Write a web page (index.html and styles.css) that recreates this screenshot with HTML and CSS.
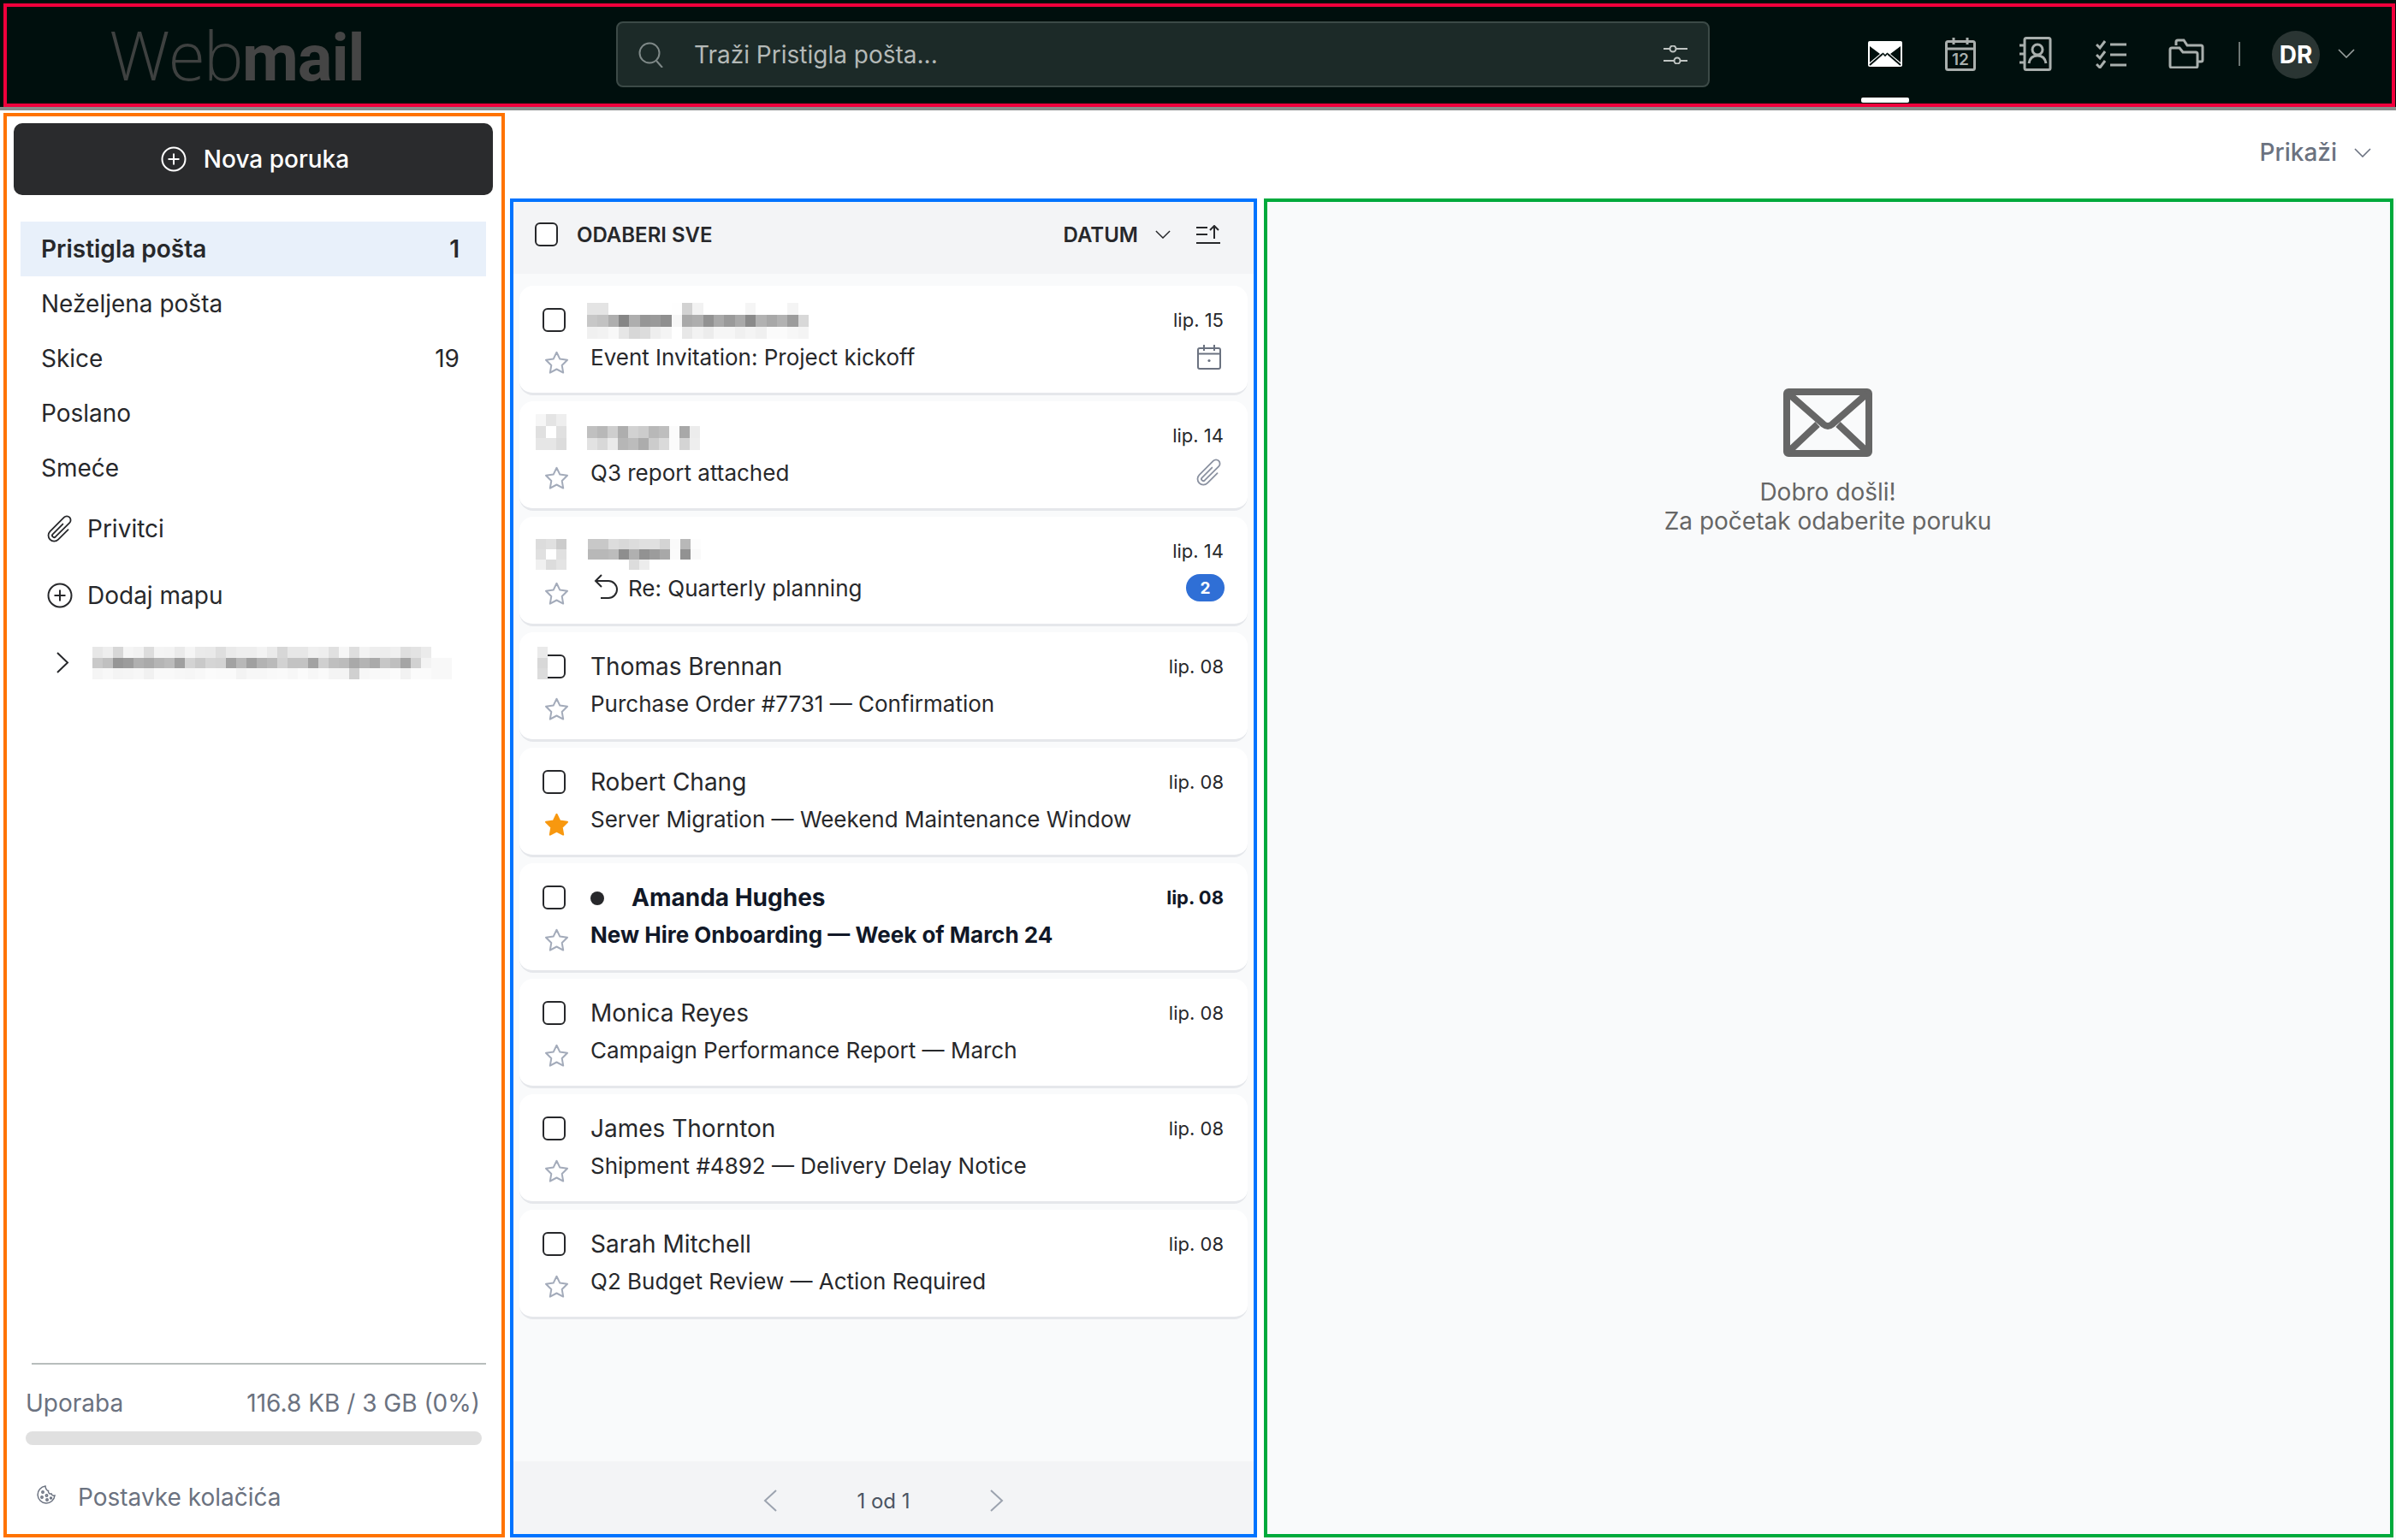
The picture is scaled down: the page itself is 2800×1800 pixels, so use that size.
FILE: index.html
```html
<!DOCTYPE html>
<html lang="hr">
<head>
  <meta charset="UTF-8" />
  <title>Webmail</title>
  <link rel="stylesheet" href="styles.css">
</head>
<body>

  <svg class="sprite" aria-hidden="true">
    <symbol id="i-star" viewBox="0 0 29 27"><path d="M14.5 1.8 18.3 9.6 27 10.8 20.7 17 22.2 25.6 14.5 21.5 6.8 25.6 8.3 17 2 10.8 10.7 9.6Z" stroke-linejoin="round"/></symbol>
    <symbol id="i-clip" viewBox="0 0 24 24"><path d="M18.375 12.739l-7.693 7.693a4.5 4.5 0 01-6.364-6.364l10.94-10.94A3 3 0 1119.5 7.372L8.552 18.32m.009-.01l-.01.01m5.699-9.941l-7.81 7.81a1.5 1.5 0 002.112 2.13" stroke-linecap="round" stroke-linejoin="round"/></symbol>
    <symbol id="i-plus" viewBox="0 0 30 30"><circle cx="15" cy="15" r="13.5"/><path d="M15 8.5v13M8.5 15h13"/></symbol>
    <symbol id="i-down" viewBox="0 0 20 11"><path d="M1 1l9 9 9-9"/></symbol>
  </svg>

  <header class="topbar">
    <div class="logo">Web<b>mail</b></div>
    <div class="search">
      <svg class="search-icon" viewBox="0 0 30 30"><circle cx="13" cy="13" r="11.5"/><path d="M21 22l7 8"/></svg>
      <span class="search-text">Traži Pristigla pošta...</span>
      <svg class="search-filter" viewBox="0 0 28 22"><path d="M0 4h7M15 4h13M0 18h12M20 18h8"/><circle cx="11" cy="4" r="3.5"/><circle cx="16" cy="18" r="3.5"/></svg>
    </div>
    <nav class="apps">
      <div class="app-tab active">
        <svg class="app-icon" width="40" height="30" viewBox="0 0 40 30"><rect width="40" height="30" rx="2" fill="#fff" stroke="none"/><path d="M2 6l12 9L2 25zM38 6L26 15l12 10z" fill="#000f0d" stroke="none"/><path d="M2 28l15-13M38 28L23 15" stroke="#000f0d" stroke-width="2"/><path d="M17 14l3 3 3-3" stroke="#000f0d" stroke-width="1.6"/></svg>
      </div>
      <div class="app-tab">
        <svg class="app-icon" width="36" height="40" viewBox="0 0 36 40"><rect x="1.5" y="5.5" width="33" height="33" rx="2"/><path d="M1.5 14h33M10 1v8M26 1v8"/><text class="cal-day" x="18" y="33" text-anchor="middle">12</text></svg>
      </div>
      <div class="app-tab">
        <svg class="app-icon" width="38" height="40" viewBox="0 0 38 40"><rect x="6" y="1.5" width="30" height="37" rx="2"/><path d="M0 10h6M0 20h6M0 30h6"/><circle cx="21" cy="15" r="6"/><path d="M11 31c1-6 5-9 10-9s9 3 10 9"/></svg>
      </div>
      <div class="app-tab">
        <svg class="app-icon" width="36" height="34" viewBox="0 0 36 34"><path d="M1 6l4 4 6-8M1 18l4 4 6-8M1 29l4 4 6-8M17 6h19M17 18h19M17 30h19"/></svg>
      </div>
      <div class="app-tab">
        <svg class="app-icon" width="42" height="35" viewBox="0 0 42 35"><path d="M2 13a2 2 0 012-2h9l4 5h15a2 2 0 012 2v14a2 2 0 01-2 2H4a2 2 0 01-2-2z"/><path d="M9 8V4a2 2 0 012-2h7l4 6h16a2 2 0 012 2v15a2 2 0 01-2 2h-3"/></svg>
      </div>
    </nav>
    <span class="topbar-divider"></span>
    <div class="avatar">DR</div>
    <svg class="chev chev-top" viewBox="0 0 20 11"><use href="#i-down"/></svg>
  </header>

  <div class="layout">
    <aside class="sidebar">
      <button class="compose">
        <svg class="compose-icon" viewBox="0 0 30 30"><use href="#i-plus"/></svg>
        Nova poruka
      </button>

      <ul class="folders">
        <li class="folder active"><span>Pristigla pošta</span><span>1</span></li>
        <li class="folder"><span>Neželjena pošta</span></li>
        <li class="folder"><span>Skice</span><span>19</span></li>
        <li class="folder"><span>Poslano</span></li>
        <li class="folder"><span>Smeće</span></li>
      </ul>

      <div class="side-link"><svg class="side-icon side-clip" viewBox="0 0 24 24"><use href="#i-clip"/></svg>Privitci</div>
      <div class="side-link"><svg class="side-icon side-plus" viewBox="0 0 30 30"><use href="#i-plus"/></svg>Dodaj mapu</div>
      <div class="side-link side-account">
        <svg class="side-chevron" viewBox="0 0 15 25"><path d="M1 1l12 11.5L1 24"/></svg>
        <div class="mosaic mosaic-nav" data-rows="e7eed7f5f2ddf4f3eaf5eae9deeaeeeef3ead7e7e7f0eee0f6def3eeedf0dfe3eb|c9c0969cb0aab5bb9fd3c9d5d3a2b8a0b3bad2c3c3a2cfbfbca9b4aac7bfa5d1f3f8f8|f5f8f4f5f7f1f9f9f7f6f8fbfafaf3f7f7f9faf7fbf7faf4f4d0f7f9f9fbf2fbfbf8f8"></div>
      </div>

      <div class="side-foot">
        <div class="side-rule"></div>
        <div class="usage"><span>Uporaba</span><span>116.8 KB / 3 GB (0%)</span></div>
        <div class="usage-bar"></div>
        <div class="cookies">
          <svg class="cookie-icon" viewBox="0 0 24 24"><path d="M11 2a10 10 0 1011 11c-2 .5-3.5-.5-4-2-2 .5-4-1-3.500-3.500C13 7.500 11 5 11 2z"/><circle cx="8" cy="9" r="1.200"/><circle cx="7" cy="15" r="1.200"/><circle cx="12.500" cy="13" r="1.200"/><circle cx="13" cy="18" r="1.200"/><circle cx="17.500" cy="16" r="1"/></svg>
          Postavke kolačića
        </div>
      </div>
    </aside>

    <main class="content">
      <div class="toolbar">
        <span>Prikaži</span>
        <svg class="chev" viewBox="0 0 20 11"><use href="#i-down"/></svg>
      </div>

      <div class="panels">
        <section class="list">
          <div class="list-head">
            <span class="check"></span>
            <span class="select-all">ODABERI SVE</span>
            <span class="sort-name">DATUM</span>
            <svg class="chev chev-sort" viewBox="0 0 20 11"><use href="#i-down"/></svg>
            <svg class="sort-icon" viewBox="0 0 28 22"><path d="M0 3h13M0 11h13M0 21h28M21 16V1M16 6l5-5 5 5"/></svg>
          </div>

          <div class="cards">
            <article class="card">
              <span class="check"></span>
              <span class="name"></span>
              <span class="date">lip. 15</span>
              <svg class="star" viewBox="0 0 29 27"><use href="#i-star"/></svg>
              <span class="subject">Event Invitation: Project kickoff</span>
              <svg class="meta-icon" viewBox="0 0 28 29"><rect x="1" y="4" width="26" height="24" rx="2"/><path d="M1 10.500h26M8 0v7M20 0v7"/><circle class="meta-dot" cx="14" cy="18.500" r="1.600"/></svg>
              <div class="mosaic mosaic-s1" data-rows="e4e4fffffffffffffed2f2fffffffff5fffffff4ff|c7c2ae86ae969a8ff7a9ae92a99aa98ab2a8b29cd8|f0f2f8e6d7dceef4ffe8f2ecf6f6f0f4f0fbfbf7f4"></div>
            </article>

            <article class="card">
              <span class="check"></span>
              <span class="name"></span>
              <span class="date">lip. 14</span>
              <svg class="star" viewBox="0 0 29 27"><use href="#i-star"/></svg>
              <span class="subject">Q3 report attached</span>
              <svg class="meta-clip" viewBox="0 0 24 24"><use href="#i-clip"/></svg>
              <div class="mosaic mosaic-a2" data-rows="f6e4ee|e0ffe0|e6e6dc"></div>
              <div class="mosaic mosaic-s2" data-rows="c0b8ceaed2ccb8befba8ec|e2d8eab6bcacccdafbd4ee"></div>
            </article>

            <article class="card">
              <span class="check"></span>
              <span class="name"></span>
              <span class="date">lip. 14</span>
              <svg class="star" viewBox="0 0 29 27"><use href="#i-star"/></svg>
              <span class="subject">
                <svg class="reply-icon" viewBox="0 0 29 31"><path d="M10 2L3 9l7 7M3 9h15a10 10 0 010 20H9"/></svg>
                Re: Quarterly planning
              </span>
              <span class="badge">2</span>
              <div class="mosaic mosaic-a3" data-rows="dce0cc|e0ffe0|f0dce4"></div>
              <div class="mosaic mosaic-s3" data-rows="c8c8dcd8dce0e0d4fab8fd|b8b8bc8eb0929ca8fb92f9|ffffffffdcecffffffffff"></div>
            </article>

            <article class="card">
              <span class="check"></span>
              <span class="name">Thomas Brennan</span>
              <span class="date">lip. 08</span>
              <svg class="star" viewBox="0 0 29 27"><use href="#i-star"/></svg>
              <span class="subject">Purchase Order #7731 — Confirmation</span>
              <div class="mosaic mosaic-a4" data-rows="ea|d8|dc"></div>
            </article>

            <article class="card">
              <span class="check"></span>
              <span class="name">Robert Chang</span>
              <span class="date">lip. 08</span>
              <svg class="star starred" viewBox="0 0 29 27"><use href="#i-star"/></svg>
              <span class="subject">Server Migration — Weekend Maintenance Window</span>
            </article>

            <article class="card unread">
              <span class="check"></span>
              <span class="name"><i class="dot"></i>Amanda Hughes</span>
              <span class="date">lip. 08</span>
              <svg class="star" viewBox="0 0 29 27"><use href="#i-star"/></svg>
              <span class="subject">New Hire Onboarding — Week of March 24</span>
            </article>

            <article class="card">
              <span class="check"></span>
              <span class="name">Monica Reyes</span>
              <span class="date">lip. 08</span>
              <svg class="star" viewBox="0 0 29 27"><use href="#i-star"/></svg>
              <span class="subject">Campaign Performance Report — March</span>
            </article>

            <article class="card">
              <span class="check"></span>
              <span class="name">James Thornton</span>
              <span class="date">lip. 08</span>
              <svg class="star" viewBox="0 0 29 27"><use href="#i-star"/></svg>
              <span class="subject">Shipment #4892 — Delivery Delay Notice</span>
            </article>

            <article class="card">
              <span class="check"></span>
              <span class="name">Sarah Mitchell</span>
              <span class="date">lip. 08</span>
              <svg class="star" viewBox="0 0 29 27"><use href="#i-star"/></svg>
              <span class="subject">Q2 Budget Review — Action Required</span>
            </article>
          </div>

          <div class="pager">
            <svg class="pager-arrow" viewBox="0 0 16 26"><path d="M15 1L2 13l13 12"/></svg>
            <span class="pager-text">1 od 1</span>
            <svg class="pager-arrow" viewBox="0 0 16 26"><path d="M1 1l13 12L1 25"/></svg>
          </div>
        </section>

        <section class="detail">
          <svg class="detail-icon" viewBox="0 0 104 80"><rect x="4" y="4" width="96" height="72" rx="2"/><path d="M6 6l41 36q5 4 10 0L98 6M6 74l34-32M98 74L64 42"/></svg>
          <p>Dobro došli!<br>Za početak odaberite poruku</p>
        </section>
      </div>
    </main>
  </div>

  <!-- okviri oznaka regija -->
  <div class="region region-top"></div>
  <div class="region region-side"></div>
  <div class="region region-list"></div>
  <div class="region region-detail"></div>

  <script src="mosaic.js"></script>
</body>
</html>
```

FILE: styles.css
```css
* {
  box-sizing: border-box;
}

body {
  margin: 0;
  width: 2800px;
  height: 1800px;
  overflow: hidden;
  position: relative;
  display: flex;
  flex-direction: column;
  background: #fff;
  color: #27282b;
  font-family: Inter, 'Noto Sans', sans-serif;
  font-size: 28px;
}

.sprite {
  display: none;
}

svg {
  flex: none;
  fill: none;
}

/* Top bar */
.topbar {
  height: 129px;
  flex: none;
  display: flex;
  align-items: center;
  padding-left: 128px;
  background: #000f0d;
  border-bottom: 4px solid #8a8d8c;
}

.logo {
  width: 592px;
  margin-top: 2px;
  font-family: 'Open Sans', sans-serif;
  font-size: 79px;
  font-weight: 300;
  letter-spacing: -2px;
  color: #3e4140;
}

.logo b {
  font-family: Roboto, sans-serif;
  font-size: 76px;
  font-weight: 700;
  letter-spacing: -1px;
  color: #454545;
}

.search {
  width: 1278px;
  height: 77px;
  margin-top: 2px;
  display: flex;
  align-items: center;
  padding: 0 24px;
  background: #1c2a28;
  border: 2px solid #3c4a47;
  border-radius: 8px;
}

.search-icon {
  width: 30px;
  height: 30px;
  stroke: #7f8988;
  stroke-width: 2;
}

.search-text {
  margin-left: 35px;
  font-size: 28px;
  color: #b4b9b7;
}

.search-filter {
  width: 28px;
  height: 22px;
  margin-left: auto;
  stroke: #c0c5c3;
  stroke-width: 2;
}

.apps {
  display: flex;
  margin-left: 161px;
}

.app-tab {
  width: 88px;
  height: 125px;
  display: flex;
  align-items: center;
  justify-content: center;
  position: relative;
}

.app-tab.active::after {
  content: '';
  position: absolute;
  left: 16px;
  bottom: 5px;
  width: 56px;
  height: 6px;
  border-radius: 2px;
  background: #fff;
}

.app-icon {
  stroke: #a9afad;
  stroke-width: 3;
}

.cal-day {
  fill: #a9afad;
  stroke: none;
  font-size: 19px;
  font-weight: 600;
}

.topbar-divider {
  width: 2px;
  height: 28px;
  margin-left: 17px;
  background: #6d7674;
}

.avatar {
  width: 56px;
  height: 56px;
  margin: 2px 0 0 37px;
  display: flex;
  align-items: center;
  justify-content: center;
  border-radius: 50%;
  background: #2a3533;
  color: #fff;
  font-size: 28px;
  font-weight: 700;
}

.chev {
  width: 20px;
  height: 11px;
  stroke: #6b7280;
  stroke-width: 1.6;
}

.chev-top {
  margin-left: 21px;
  stroke: #9aa19f;
}

/* Layout */
.layout {
  flex: 1;
  display: flex;
  min-height: 0;
}

.sidebar {
  width: 590px;
  flex: none;
  display: flex;
  flex-direction: column;
  padding-top: 15px;
}

.compose {
  height: 84px;
  margin: 0 14px 0 16px;
  padding: 0 0 0 4px;
  display: flex;
  align-items: center;
  justify-content: center;
  gap: 20px;
  border: none;
  border-radius: 10px;
  background: #2a2b2d;
  color: #fff;
  font-family: inherit;
  font-size: 28px;
  font-weight: 500;
}

.compose-icon {
  width: 30px;
  height: 30px;
  stroke: #fff;
  stroke-width: 2;
}

.folders {
  list-style: none;
  margin: 31px 22px 0 24px;
  padding: 0;
}

.folder {
  height: 64px;
  display: flex;
  align-items: center;
  justify-content: space-between;
  padding: 0 31px 0 24px;
}

.folder.active {
  background: #e8f0fa;
  font-weight: 600;
}

.side-link {
  height: 78px;
  display: flex;
  align-items: center;
  gap: 17px;
  padding-left: 55px;
  position: relative;
}

.side-icon {
  width: 30px;
  height: 30px;
  stroke: #27282b;
  stroke-width: 1.500;
}

.side-clip {
  width: 36px;
  height: 36px;
  margin: 0 -3px;
  stroke-width: 1.200;
}

.side-plus {
  stroke-width: 2;
}

.side-chevron {
  width: 15px;
  height: 25px;
  margin-left: 11px;
  stroke: #27282b;
  stroke-width: 2;
}

.side-foot {
  margin-top: auto;
  padding: 0 27px 27px 30px;
}

.side-rule {
  height: 2px;
  margin: 0 -5px 28px 7px;
  background: #b8bdbc;
}

.usage {
  height: 34px;
  display: flex;
  align-items: center;
  justify-content: space-between;
  padding-right: 2px;
  font-size: 28px;
  color: #6b7280;
}

.usage-bar {
  height: 16px;
  margin-top: 16px;
  border-radius: 8px;
  background: #e0e0e0;
}

.cookies {
  height: 46px;
  margin-top: 38px;
  display: flex;
  align-items: center;
  gap: 25px;
  padding-left: 12px;
  font-size: 28px;
  color: #6b7280;
}

.cookie-icon {
  width: 24px;
  height: 24px;
  margin-top: -6px;
  stroke: #6b7280;
  stroke-width: 1.500;
}

/* Main */
.content {
  flex: 1;
  display: flex;
  flex-direction: column;
  min-width: 0;
}

.toolbar {
  height: 103px;
  flex: none;
  display: flex;
  align-items: center;
  justify-content: flex-end;
  gap: 20px;
  padding: 0 29px 5px 0;
  font-size: 28px;
  font-weight: 500;
  color: #6b7280;
}

.panels {
  flex: 1;
  display: flex;
  gap: 8px;
  min-height: 0;
  padding-left: 6px;
}

.list {
  width: 873px;
  flex: none;
  display: flex;
  flex-direction: column;
  background: #f9fafb;
}

.list-head {
  height: 88px;
  flex: none;
  display: flex;
  align-items: center;
  padding: 0 43px 4px 29px;
  background: #f3f4f6;
  font-size: 24px;
  font-weight: 600;
}

.check {
  width: 27px;
  height: 28px;
  flex: none;
  background: #fff;
  border: 2px solid #27282b;
  border-radius: 6px;
}

.select-all {
  margin-left: 22px;
}

.sort-name {
  margin-left: auto;
}

.chev-sort {
  width: 18px;
  height: 10px;
  margin-left: 20px;
  stroke: #27282b;
}

.sort-icon {
  width: 28px;
  height: 22px;
  margin-left: 30px;
  stroke: #27282b;
  stroke-width: 2;
}

.cards {
  flex: 1;
  display: flex;
  flex-direction: column;
  gap: 7px;
  padding: 14px 11px 0;
}

.card {
  height: 128px;
  flex: none;
  display: grid;
  grid-template-columns: 56px 1fr auto;
  grid-template-rows: 44px 42px;
  align-items: center;
  padding: 18px 28px 0 27px;
  background: #fff;
  border-bottom: 3px solid #e5e7eb;
  border-radius: 16px;
  position: relative;
}

.name {
  font-size: 28px;
}

.date {
  justify-self: end;
  font-size: 22px;
}

.star {
  width: 29px;
  height: 27px;
  margin: 14px 0 0 2px;
  align-self: start;
  stroke: #a3abba;
  stroke-width: 2;
}

.star.starred {
  fill: #f8980f;
  stroke: #f8980f;
}

.subject {
  display: flex;
  align-items: center;
  gap: 12px;
  font-size: 26px;
}

.reply-icon {
  width: 29px;
  height: 31px;
  margin: -4px 0 0 3px;
  stroke: #27282b;
  stroke-width: 2;
}

.meta-icon {
  width: 28px;
  height: 29px;
  margin-right: 3px;
  justify-self: end;
  stroke: #6b7280;
  stroke-width: 2;
}

.meta-clip {
  width: 36px;
  height: 36px;
  margin: -3px -1px -3px 0;
  justify-self: end;
  stroke: #8a91a0;
  stroke-width: 1.200;
}

.meta-dot {
  fill: #6b7280;
  stroke: none;
}

.badge {
  width: 45px;
  height: 32px;
  margin-right: -1px;
  justify-self: end;
  display: flex;
  align-items: center;
  justify-content: center;
  border-radius: 16px;
  background: #2f6fd6;
  color: #fff;
  font-size: 19px;
  font-weight: 700;
}

.unread .name,
.unread .date,
.unread .subject {
  font-weight: 700;
  color: #111827;
}

.dot {
  display: inline-block;
  width: 16px;
  height: 16px;
  margin: 0 32px 1px 0;
  border-radius: 50%;
  background: #27282b;
}

.pager {
  height: 92px;
  flex: none;
  display: flex;
  align-items: center;
  justify-content: center;
  gap: 93px;
  background: #f3f4f6;
  font-size: 24px;
  color: #4b5563;
}

.pager-arrow {
  width: 16px;
  height: 26px;
  stroke: #9ca3af;
  stroke-width: 2;
}

.detail {
  flex: 1;
  display: flex;
  flex-direction: column;
  align-items: center;
  padding: 222px 5px 0 0;
  background: #f9fafb;
  color: #666;
}

.detail-icon {
  width: 104px;
  height: 80px;
  stroke: #666;
  stroke-width: 8;
}

.detail p {
  margin: 24px 0 0;
  font-size: 28px;
  line-height: 34px;
  text-align: center;
}

/* Mosaics */
.mosaic {
  position: absolute;
  display: flex;
  flex-direction: column;
}

.mosaic div {
  display: flex;
}

.mosaic span {
  display: block;
  flex: none;
  width: 12px;
  height: 14px;
}

.mosaic-nav {
  left: 108px;
  top: 21px;
}

.mosaic-nav span {
  height: 12.670px;
}

.mosaic-s1 {
  left: 79px;
  top: 20px;
}

.mosaic-s1 span {
  width: 12.330px;
}

.mosaic-a2 {
  left: 19px;
  top: 15px;
}

.mosaic-s2 {
  left: 79px;
  top: 29px;
}

.mosaic-a3 {
  left: 19px;
  top: 26px;
}

.mosaic-a3 span,
.mosaic-s3 span {
  height: 12px;
}

.mosaic-s3 {
  left: 80px;
  top: 26px;
}

.mosaic-a4 {
  left: 21px;
  top: 17px;
}

.mosaic-a4 span {
  height: 12.670px;
}

/* Region outlines */
.region {
  position: absolute;
  border: 4px solid;
  pointer-events: none;
}

.region-top {
  left: 4px;
  top: 4px;
  width: 2795px;
  height: 121px;
  border-color: #f0003c;
}

.region-side {
  left: 4px;
  top: 132px;
  width: 586px;
  height: 1665px;
  border-color: #ff7300;
}

.region-list {
  left: 596px;
  top: 232px;
  width: 873px;
  height: 1565px;
  border-color: #0073ff;
}

.region-detail {
  left: 1477px;
  top: 232px;
  width: 1320px;
  height: 1565px;
  border-color: #00aa3c;
}
```

FILE: mosaic.js
```js
// Builds the mosaics from data-rows (two hex digits = one grey tone)
document.querySelectorAll('.mosaic').forEach(function (box) {
  box.dataset.rows.split('|').forEach(function (row) {
    const line = document.createElement('div');
    for (let i = 0; i < row.length; i += 2) {
      const tone = row.substr(i, 2);
      const cell = document.createElement('span');
      cell.style.background = '#' + tone + tone + tone;
      line.appendChild(cell);
    }
    box.appendChild(line);
  });
});
```
